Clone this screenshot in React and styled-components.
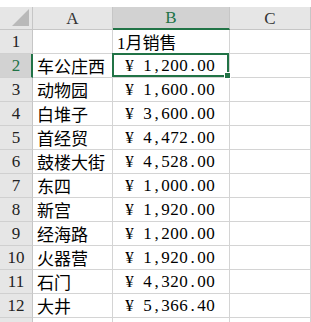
import React from "react";
import styled, { createGlobalStyle } from "styled-components";

const GlobalStyle = createGlobalStyle`
  html, body {
    margin: 0;
    padding: 0;
    background: #ffffff;
    overflow: hidden;
  }
`;

const GREEN = "#217346";

const Sheet = styled.div`
  display: grid;
  grid-template-columns: 33px 80px 117px 81px;
  grid-template-rows: 23px;
  grid-auto-rows: 24px;
  box-sizing: border-box;
  padding-top: 7px;
  width: 311px;
  height: 322px;
  overflow: hidden;
  font-family: "Liberation Serif", "Noto Sans CJK SC", serif;
  font-size: 17px;
  color: #000;
`;

const Corner = styled.div`
  position: relative;
  box-sizing: border-box;
  background: #e6e6e6;
  border-right: 1px solid #c6c6c6;
  border-bottom: 1px solid #c6c6c6;
  overflow: hidden;

  &::after {
    content: "";
    position: absolute;
    right: 3px;
    bottom: 3px;
    width: 0;
    height: 0;
    border-left: 17px solid transparent;
    border-bottom: 17px solid #b9b9b9;
  }
`;

const ColHead = styled.div`
  box-sizing: border-box;
  display: flex;
  align-items: center;
  justify-content: center;
  background: ${(p) => (p.$active ? "#d2d2d2" : "#e6e6e6")};
  color: ${(p) => (p.$active ? GREEN : "#333")};
  border-right: 1px solid #c6c6c6;
  border-bottom: ${(p) => (p.$active ? `2px solid ${GREEN}` : "1px solid #c6c6c6")};
  padding-top: 1px;
`;

const RowHead = styled.div`
  box-sizing: border-box;
  display: flex;
  align-items: center;
  justify-content: center;
  background: ${(p) => (p.$active ? "#d2d2d2" : "#e6e6e6")};
  color: ${(p) => (p.$active ? GREEN : "#222")};
  border-right: ${(p) => (p.$active ? `2px solid ${GREEN}` : "1px solid #c6c6c6")};
  border-bottom: 1px solid #d0d0d0;
  padding-left: ${(p) => (p.$active ? "1px" : "0")};
`;

const Cell = styled.div`
  position: relative;
  box-sizing: border-box;
  display: flex;
  align-items: center;
  white-space: nowrap;
  border-right: 1px solid #d4d4d4;
  border-bottom: 1px solid #d4d4d4;
  padding-left: ${(p) => p.$pad || "4px"};
  z-index: ${(p) => (p.$selected ? 2 : "auto")};
`;

const Money = styled.span`
  display: flex;
  padding-left: 12px;
`;

const Char = styled.span`
  display: inline-block;
  width: 9px;
  text-align: center;
`;

const Selection = styled.div`
  position: absolute;
  top: -1px;
  left: -1px;
  right: 0;
  bottom: 0;
  border: 2px solid ${GREEN};
  pointer-events: none;
`;

const Handle = styled.div`
  position: absolute;
  right: -4px;
  bottom: -4px;
  width: 5px;
  height: 5px;
  background: ${GREEN};
  border: 1px solid #fff;
`;

const rows = [
  ["", "1月销售"],
  ["车公庄西", "¥ 1,200.00"],
  ["动物园", "¥ 1,600.00"],
  ["白堆子", "¥ 3,600.00"],
  ["首经贸", "¥ 4,472.00"],
  ["鼓楼大街", "¥ 4,528.00"],
  ["东四", "¥ 1,000.00"],
  ["新宫", "¥ 1,920.00"],
  ["经海路", "¥ 1,200.00"],
  ["火器营", "¥ 1,920.00"],
  ["石门", "¥ 4,320.00"],
  ["大井", "¥ 5,366.40"],
  ["", ""],
];

function Amount({ value }) {
  return (
    <Money>
      {value.split("").map((c, i) => (
        <Char key={i}>{c}</Char>
      ))}
    </Money>
  );
}

export default function App() {
  return (
    <>
      <GlobalStyle />
      <Sheet>
        <Corner />
        <ColHead>A</ColHead>
        <ColHead $active>B</ColHead>
        <ColHead>C</ColHead>
        {rows.map(([name, value], i) => {
          const n = i + 1;
          const selected = n === 2;
          return (
            <React.Fragment key={n}>
              <RowHead $active={selected}>{n <= 12 ? n : ""}</RowHead>
              <Cell>{name}</Cell>
              {value.startsWith("¥") ? (
                <Cell $pad="0" $selected={selected}>
                  <Amount value={value} />
                  {selected && (
                    <Selection>
                      <Handle />
                    </Selection>
                  )}
                </Cell>
              ) : (
                <Cell>{value}</Cell>
              )}
              <Cell />
            </React.Fragment>
          );
        })}
      </Sheet>
    </>
  );
}
